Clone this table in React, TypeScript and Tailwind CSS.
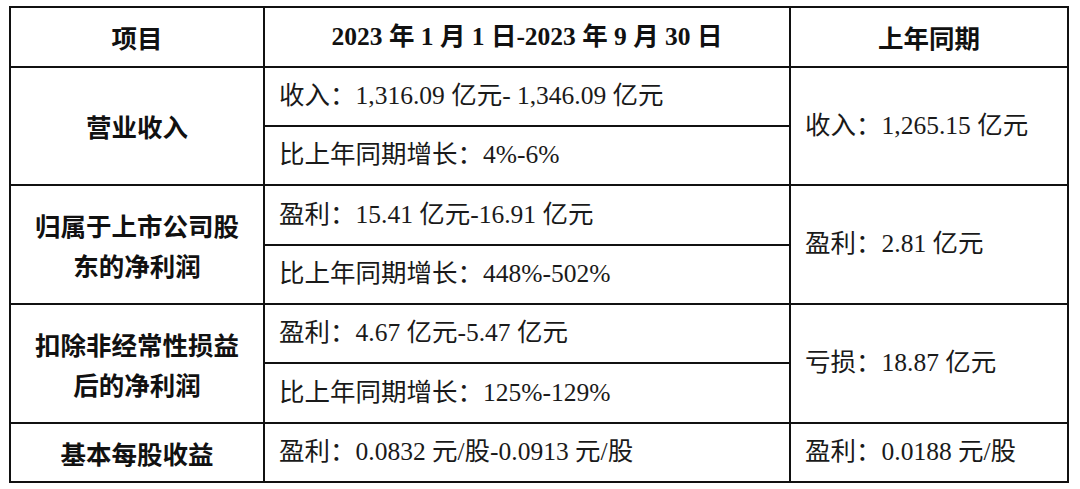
const serif = "font-['Liberation_Serif','Noto_Sans_CJK_SC',serif]"

function Label({ children, rows = '' }: { children: React.ReactNode; rows?: string }) {
  return (
    <div
      className={`${rows} flex items-center justify-center border-r-2 border-b-2 border-[#111] text-center text-[25.5px] leading-[40px] font-bold text-[#111] font-['Noto_Sans_CJK_SC',sans-serif]`}
    >
      {children}
    </div>
  )
}

function Cell({ children, rows = '' }: { children: React.ReactNode; rows?: string }) {
  return (
    <div
      className={`${rows} flex items-center border-r-2 border-b-2 border-[#111] pl-[14px] text-[25.5px] text-[#1a1a1a] ${serif}`}
    >
      <span className="whitespace-pre">{children}</span>
    </div>
  )
}

export default function App() {
  return (
    <div className="min-h-screen w-[1080px] bg-white pt-[6px] pl-[9px]">
      <div className="grid w-[1060px] grid-cols-[254px_526px_278px] grid-rows-[60px_59px_59px_60px_59px_59px_60px_59px] border-t-2 border-l-2 border-[#111]">
        {/* header */}
        <Label>项目</Label>
        <div className={`flex items-center justify-center border-r-2 border-b-2 border-[#111] text-[25.5px] font-bold text-[#111] ${serif}`}>
          2023 年 1 月 1 日-2023 年 9 月 30 日
        </div>
        <Label>上年同期</Label>

        <Label rows="row-span-2">营业收入</Label>
        <Cell>收入：1,316.09 亿元- 1,346.09 亿元</Cell>
        <Cell rows="row-span-2">收入：1,265.15 亿元</Cell>
        <Cell>比上年同期增长：4%-6%</Cell>

        <Label rows="row-span-2">
          归属于上市公司股
          <br />
          东的净利润
        </Label>
        <Cell>盈利：15.41 亿元-16.91 亿元</Cell>
        <Cell rows="row-span-2">盈利：2.81 亿元</Cell>
        <Cell>比上年同期增长：448%-502%</Cell>

        <Label rows="row-span-2">
          扣除非经常性损益
          <br />
          后的净利润
        </Label>
        <Cell>盈利：4.67 亿元-5.47 亿元</Cell>
        <Cell rows="row-span-2">亏损：18.87 亿元</Cell>
        <Cell>比上年同期增长：125%-129%</Cell>

        <Label>基本每股收益</Label>
        <Cell>盈利：0.0832 元/股-0.0913 元/股</Cell>
        <Cell>盈利：0.0188 元/股</Cell>
      </div>
    </div>
  )
}
